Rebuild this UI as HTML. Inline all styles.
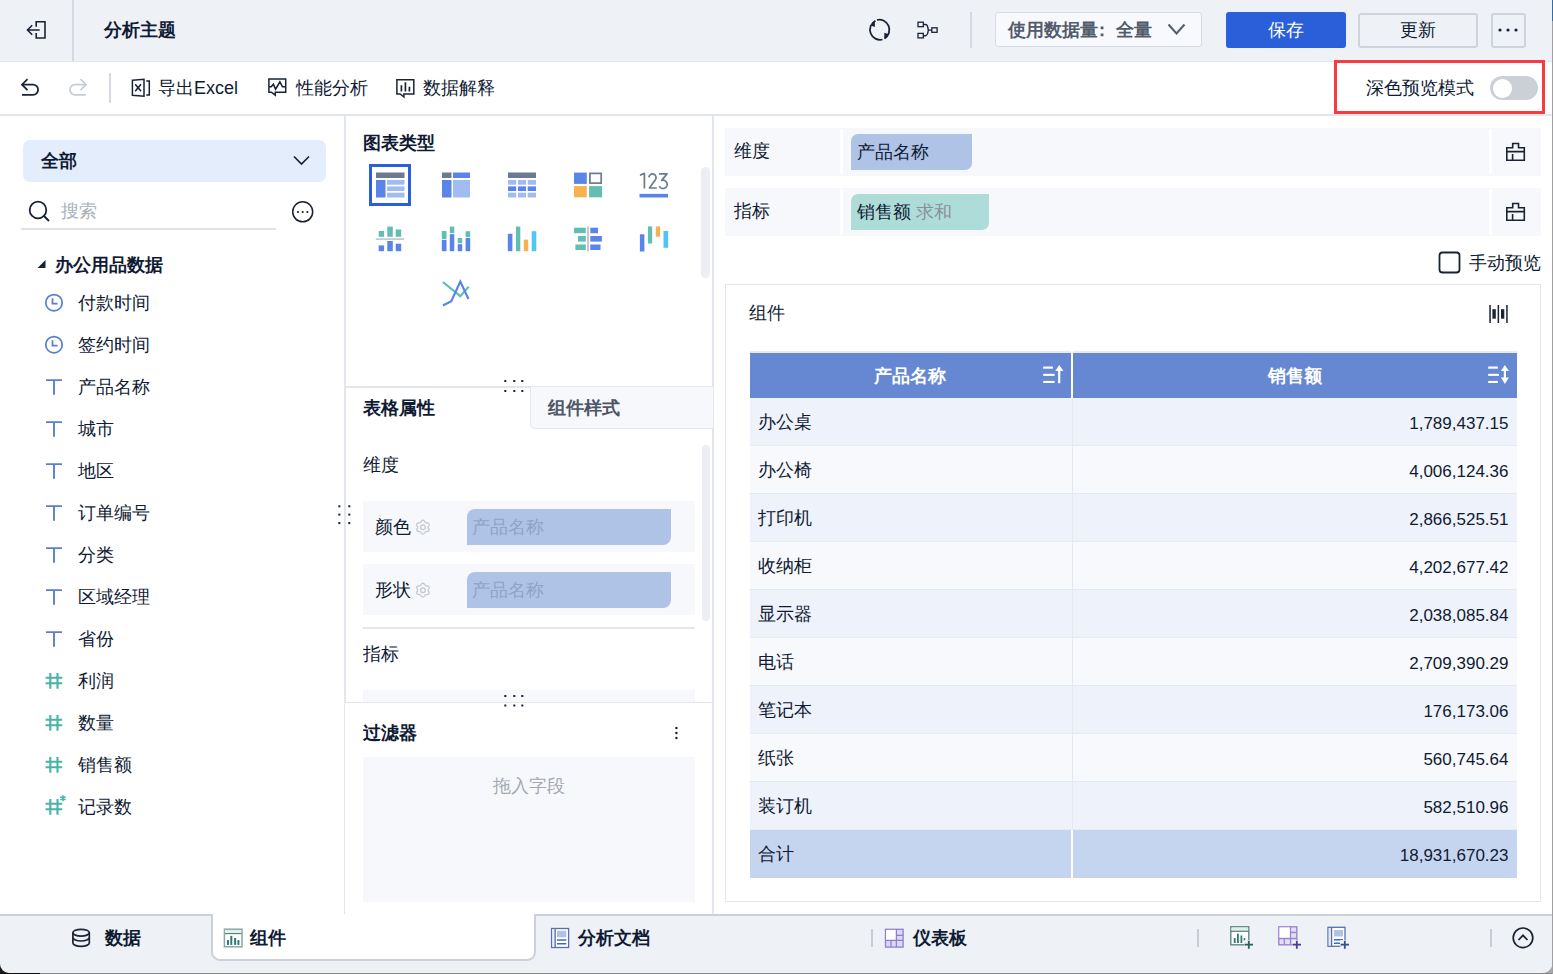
<!DOCTYPE html>
<html><head><meta charset="utf-8">
<style>
*{box-sizing:border-box;margin:0;padding:0}
html,body{width:1553px;height:974px;overflow:hidden;background:#fff}
body{position:relative;font-family:"Liberation Sans",sans-serif;color:#0F1A33;font-size:18px}
.a{position:absolute}
.t{position:absolute;white-space:nowrap;line-height:24px;font-size:18px}
.b{font-weight:bold}
svg{position:absolute;overflow:visible}
</style></head><body>

<!-- ===== HEADER ===== -->
<div class="a" style="left:0;top:0;width:1553px;height:62px;background:#EEF1F6;border-bottom:1px solid #E1E5EC"></div>
<div class="a" style="left:72px;top:0;width:2px;height:61px;background:#D5D9E1"></div>
<!-- exit icon -->
<svg style="left:0;top:0" width="80" height="60">
  <path d="M36.2 26.7 V21.8 H45 V38 H36.2 V33.1" fill="none" stroke="#1A2335" stroke-width="1.6"/>
  <path d="M39.7 30 H27.8 M32.2 25.3 L27.5 30 L32.2 34.7" fill="none" stroke="#1A2335" stroke-width="1.6"/>
</svg>
<div class="t b" style="left:104px;top:18px">分析主题</div>

<!-- refresh icon -->
<svg style="left:0;top:0" width="1553" height="60">
  <path d="M876.9 20 A10.1 10.1 0 0 1 884.6 38.4" fill="none" stroke="#1A2335" stroke-width="1.8"/>
  <path d="M875.5 20.7 A10.1 10.1 0 0 0 882.5 39.5" fill="none" stroke="#1A2335" stroke-width="1.8"/>
  <path d="M874.9 20.6 L874.9 27 L870.6 25.6 Z" fill="#1A2335"/>
  <path d="M884.3 32.8 L884.3 39.2 L888.4 34.2 Z" fill="#1A2335"/>
  <!-- hierarchy -->
  <rect x="918" y="22.2" width="5.3" height="4.5" fill="none" stroke="#1A2335" stroke-width="1.3"/>
  <rect x="918" y="33.4" width="5.3" height="4.5" fill="none" stroke="#1A2335" stroke-width="1.3"/>
  <rect x="931.8" y="27.8" width="5.3" height="4.5" fill="none" stroke="#1A2335" stroke-width="1.3"/>
  <path d="M923.2 24.5 H925.5 Q927.3 24.5 927.8 27.5 L928.3 30 Q927.8 35.5 925.5 35.7 H923.2 M928.3 30.1 H932" fill="none" stroke="#1A2335" stroke-width="1.4"/>
</svg>
<div class="a" style="left:970px;top:12px;width:1.5px;height:36px;background:#D5D9E1"></div>
<!-- data amount dropdown -->
<div class="a" style="left:995px;top:12px;width:207px;height:35px;background:#F8F9FC;border:1.5px solid #D8DCE4;border-radius:3px"></div>
<div class="t b" style="left:1008px;top:18px;color:#535C6B">使用数据量<span style="position:relative;left:-5px">：</span>全量</div>
<svg style="left:0;top:0" width="1553" height="60">
  <path d="M1168.5 24.5 L1176.5 33.5 L1184.5 24.5" fill="none" stroke="#535C6B" stroke-width="2"/>
</svg>
<div class="a" style="left:1226px;top:12px;width:120px;height:36px;background:#2B5FD9;border-radius:3px"></div>
<div class="t" style="left:1268px;top:18px;color:#fff">保存</div>
<div class="a" style="left:1358px;top:12.5px;width:120px;height:35px;background:#EEF1F6;border:2px solid #CFD3DB;border-radius:3px"></div>
<div class="t" style="left:1400px;top:18px;">更新</div>
<div class="a" style="left:1490.5px;top:12.5px;width:35px;height:35px;border:2px solid #CFD3DB;border-radius:3px"></div>
<svg style="left:0;top:0" width="1553" height="60">
  <circle cx="1500" cy="30" r="1.6" fill="#1A2335"/><circle cx="1508" cy="30" r="1.6" fill="#1A2335"/><circle cx="1516" cy="30" r="1.6" fill="#1A2335"/>
</svg>

<!-- ===== TOOLBAR ===== -->
<div class="a" style="left:0;top:114px;width:1553px;height:2px;background:#E3E6ED"></div>
<svg style="left:0;top:0" width="1553" height="120">
  <!-- undo -->
  <path d="M22 94.9 H33 A5.1 5.1 0 0 0 33 84.7 H22" fill="none" stroke="#1A2335" stroke-width="1.8"/>
  <path d="M27.5 79.2 L22 84.7 L27.5 90.2" fill="none" stroke="#1A2335" stroke-width="1.8"/>
  <!-- redo -->
  <path d="M86 94.9 H75 A5.1 5.1 0 0 1 75 84.7 H86" fill="none" stroke="#C8CDD5" stroke-width="1.8"/>
  <path d="M80.5 79.2 L86 84.7 L80.5 90.2" fill="none" stroke="#C8CDD5" stroke-width="1.8"/>
  <!-- excel -->
  <path d="M132.4 80.3 L144 79.3 V96.2 L132.4 95.3 Z" fill="none" stroke="#1A2335" stroke-width="1.5"/>
  <path d="M135.2 84.3 L141 91.3 M141 84.3 L135.2 91.3" fill="none" stroke="#1A2335" stroke-width="1.6"/>
  <path d="M146.3 80.9 H149.3 V95 H146.3" fill="none" stroke="#1A2335" stroke-width="1.5"/>
  <!-- perf -->
  <path d="M268.9 78.9 H285.7 V92.2 H275.3 V95.2 L271.4 92.2 H268.9 Z" fill="none" stroke="#1A2335" stroke-width="1.5" stroke-linejoin="miter"/>
  <path d="M269 86.8 H271.2 L273.4 84.2 L275.6 89.2 L279.9 81.9 L282.5 86.8 H285.7" fill="none" stroke="#1A2335" stroke-width="1.6"/>
  <!-- data explain -->
  <path d="M396.9 79.8 H413.8 V94 H403.9 V97 L400.2 94 H396.9 Z" fill="none" stroke="#1A2335" stroke-width="1.5"/>
  <path d="M401.4 85.2 V91.6 M405.4 82.3 V91.6 M409.4 86.8 V91.6" fill="none" stroke="#1A2335" stroke-width="1.7"/>
</svg>
<div class="a" style="left:109px;top:73px;width:1.5px;height:30px;background:#D5D9E1"></div>
<div class="t" style="left:158px;top:76px">导出Excel</div>
<div class="t" style="left:296px;top:76px">性能分析</div>
<div class="t" style="left:423px;top:76px">数据解释</div>
<!-- dark mode toggle -->
<div class="a" style="left:1334px;top:60px;width:211px;height:54px;border:3px solid #F93A40"></div>
<div class="t" style="left:1366px;top:76px">深色预览模式</div>
<div class="a" style="left:1490px;top:76px;width:48px;height:24px;border-radius:12px;background:#CBCFD6"></div>
<div class="a" style="left:1492.5px;top:78.5px;width:19px;height:19px;border-radius:50%;background:#fff"></div>

<!-- ===== PANELS ===== -->
<div class="a" style="left:344px;top:115px;width:1.5px;height:799px;background:#E3E6ED"></div>
<div class="a" style="left:712px;top:115px;width:2px;height:799px;background:#E3E6ED"></div>

<!-- ===== LEFT PANEL ===== -->
<div class="a" style="left:23px;top:140px;width:303px;height:42px;background:#E4EDFC;border-radius:7px"></div>
<div class="t b" style="left:41px;top:149px">全部</div>
<div class="t" style="left:61px;top:199px;color:#A9AFB9">搜索</div>
<div class="a" style="left:21px;top:228px;width:255px;height:2px;background:#DDE1E8"></div>
<div class="t b" style="left:55px;top:253px">办公用品数据</div>

<div class="t" style="left:78px;top:290.7px">付款时间</div>
<div class="t" style="left:78px;top:332.7px">签约时间</div>
<div class="t" style="left:78px;top:374.7px">产品名称</div>
<div class="t" style="left:78px;top:416.7px">城市</div>
<div class="t" style="left:78px;top:458.7px">地区</div>
<div class="t" style="left:78px;top:500.7px">订单编号</div>
<div class="t" style="left:78px;top:542.7px">分类</div>
<div class="t" style="left:78px;top:584.7px">区域经理</div>
<div class="t" style="left:78px;top:626.7px">省份</div>
<div class="t" style="left:78px;top:668.7px">利润</div>
<div class="t" style="left:78px;top:710.7px">数量</div>
<div class="t" style="left:78px;top:752.7px">销售额</div>
<div class="t" style="left:78px;top:794.7px">记录数</div>
<svg style="left:0;top:0" width="344" height="914">
<path d="M294 156.5 L301.5 164 L309 156.5" fill="none" stroke="#1A2335" stroke-width="1.7"/>
<circle cx="38" cy="210" r="8.3" fill="none" stroke="#1A2335" stroke-width="1.8"/>
<path d="M44 216 L49 221" stroke="#1A2335" stroke-width="1.9"/>
<circle cx="302.7" cy="211.8" r="10" fill="none" stroke="#1A2335" stroke-width="1.5"/>
<circle cx="298" cy="212" r="1.1" fill="#1A2335"/><circle cx="302.7" cy="212" r="1.1" fill="#1A2335"/><circle cx="307.4" cy="212" r="1.1" fill="#1A2335"/>
<path d="M37.5 268 L45.5 268 L45.5 260 Z" fill="#1A2335"/>
<circle cx="54" cy="302.7" r="8.2" fill="none" stroke="#5A7FCF" stroke-width="1.75"/>
<path d="M52.5 298.2 V303.7 H57.5" fill="none" stroke="#5A7FCF" stroke-width="1.75"/>
<circle cx="54" cy="344.7" r="8.2" fill="none" stroke="#5A7FCF" stroke-width="1.75"/>
<path d="M52.5 340.2 V345.7 H57.5" fill="none" stroke="#5A7FCF" stroke-width="1.75"/>
<path d="M46 380.1 H62 M54 380.1 V394.7" fill="none" stroke="#5A7FCF" stroke-width="1.9"/>
<path d="M46 422.1 H62 M54 422.1 V436.7" fill="none" stroke="#5A7FCF" stroke-width="1.9"/>
<path d="M46 464.1 H62 M54 464.1 V478.7" fill="none" stroke="#5A7FCF" stroke-width="1.9"/>
<path d="M46 506.1 H62 M54 506.1 V520.7" fill="none" stroke="#5A7FCF" stroke-width="1.9"/>
<path d="M46 548.1 H62 M54 548.1 V562.7" fill="none" stroke="#5A7FCF" stroke-width="1.9"/>
<path d="M46 590.1 H62 M54 590.1 V604.7" fill="none" stroke="#5A7FCF" stroke-width="1.9"/>
<path d="M46 632.1 H62 M54 632.1 V646.7" fill="none" stroke="#5A7FCF" stroke-width="1.9"/>
<path d="M50.3 673.0 V688.8 M57.5 673.0 V688.8 M45.6 677.7 H62.2 M45.6 683.3 H62.2" fill="none" stroke="#48B3A6" stroke-width="2.1"/>
<path d="M50.3 715.0 V730.8 M57.5 715.0 V730.8 M45.6 719.7 H62.2 M45.6 725.3 H62.2" fill="none" stroke="#48B3A6" stroke-width="2.1"/>
<path d="M50.3 757.0 V772.8 M57.5 757.0 V772.8 M45.6 761.7 H62.2 M45.6 767.3 H62.2" fill="none" stroke="#48B3A6" stroke-width="2.1"/>
<path d="M50.3 799.0 V814.8 M57.5 799.0 V814.8 M45.6 803.7 H62.2 M45.6 809.3 H62.2" fill="none" stroke="#48B3A6" stroke-width="2.1"/>
<path d="M63 795.3 V801.3 M60.4 796.8 L65.6 799.8 M60.4 799.8 L65.6 796.8" stroke="#48B3A6" stroke-width="1.6"/>
</svg>

<!-- ===== MIDDLE PANEL ===== -->
<div class="t b" style="left:363px;top:131px">图表类型</div>
<div class="a" style="left:369px;top:164px;width:42px;height:42px;border:3px solid #2B5FD9"></div>
<svg style="left:0;top:0" width="714" height="914">
 <g id="ic1">
  <rect x="376" y="172.5" width="28.5" height="5.5" fill="#6B7A90"/>
  <rect x="376" y="180" width="9.5" height="17.5" fill="#5B84E8"/>
  <rect x="387" y="180" width="17.5" height="4.7" fill="#A0BCF0"/>
  <rect x="387" y="186.4" width="17.5" height="4.6" fill="#A0BCF0"/>
  <rect x="387" y="192.7" width="17.5" height="4.8" fill="#A0BCF0"/>
 </g>
 <g>
  <rect x="442" y="172.5" width="9.5" height="5.5" fill="#6B7A90"/>
  <rect x="453" y="172.5" width="17" height="5.5" fill="#5B84E8"/>
  <rect x="442" y="180" width="9.5" height="17.5" fill="#5B84E8"/>
  <rect x="453" y="180" width="17" height="17.5" fill="#A0BCF0"/>
 </g>
 <g>
  <rect x="508" y="172.5" width="28" height="5.5" fill="#6B7A90"/>
  <rect x="508" y="180" width="8.2" height="4.7" fill="#A0BCF0"/><rect x="518" y="180" width="8" height="4.7" fill="#A0BCF0"/><rect x="527.7" y="180" width="8.3" height="4.7" fill="#A0BCF0"/>
  <rect x="508" y="186.4" width="8.2" height="4.6" fill="#5B84E8"/><rect x="518" y="186.4" width="8" height="4.6" fill="#5B84E8"/><rect x="527.7" y="186.4" width="8.3" height="4.6" fill="#5B84E8"/>
  <rect x="508" y="192.7" width="8.2" height="4.8" fill="#A0BCF0"/><rect x="518" y="192.7" width="8" height="4.8" fill="#A0BCF0"/><rect x="527.7" y="192.7" width="8.3" height="4.8" fill="#A0BCF0"/>
 </g>
 <g>
  <rect x="574" y="172.6" width="12.8" height="11.3" fill="#5B84E8"/>
  <rect x="589.9" y="173.4" width="11.3" height="9.7" fill="none" stroke="#6B7A90" stroke-width="1.7"/>
  <rect x="574" y="186.1" width="12.8" height="11.2" fill="#F9B04F"/>
  <rect x="589.1" y="186.1" width="12.9" height="11.2" fill="#62BEB3"/>
 </g>
 <g>
  <path d="M639.9 175.3 L644.4 173.4 V188.6 M648.9 177.4 A3.6 3.6 0 1 1 655.6 179.4 L649.4 188 H656.8 M659.1 173.9 H667 L661.7 180.4 A4.15 4.15 0 1 1 659.2 186" fill="none" stroke="#6B7A90" stroke-width="1.7" stroke-linejoin="round"/>
  <rect x="639.5" y="193.9" width="28.5" height="3.6" fill="#5B84E8"/>
 </g>
 <!-- row 2 -->
 <g>
  <rect x="378.7" y="231" width="5.4" height="5.8" fill="#62BEB3"/>
  <rect x="387.3" y="226.6" width="5.5" height="10.2" fill="#62BEB3"/>
  <rect x="395.7" y="229.5" width="5.5" height="7.3" fill="#62BEB3"/>
  <rect x="375.8" y="238.2" width="28.4" height="1.8" fill="#C5CAD3"/>
  <rect x="378.7" y="245.4" width="5.4" height="5.8" fill="#5B84E8"/>
  <rect x="387.3" y="241" width="5.5" height="10.2" fill="#5B84E8"/>
  <rect x="395.7" y="243.7" width="5.5" height="7.5" fill="#5B84E8"/>
 </g>
 <g>
  <rect x="441.8" y="231" width="4.7" height="8.1" fill="#62BEB3"/><rect x="441.8" y="239.9" width="4.7" height="11.3" fill="#5B84E8"/>
  <rect x="449.8" y="226.6" width="4.5" height="6.4" fill="#62BEB3"/><rect x="449.8" y="234.1" width="4.5" height="17.1" fill="#5B84E8"/>
  <rect x="457.7" y="238" width="4.5" height="5.2" fill="#62BEB3"/><rect x="457.7" y="244.2" width="4.5" height="7" fill="#5B84E8"/>
  <rect x="465.6" y="231.2" width="4.6" height="5.8" fill="#62BEB3"/><rect x="465.6" y="238" width="4.6" height="13.2" fill="#5B84E8"/>
 </g>
 <g>
  <rect x="507.8" y="233.8" width="4.6" height="17.4" fill="#5B84E8"/>
  <rect x="515.9" y="226.6" width="4.4" height="24.6" fill="#62BEB3"/>
  <rect x="523.8" y="239.6" width="4.4" height="11.6" fill="#F9B04F"/>
  <rect x="531.7" y="231.2" width="4.6" height="20" fill="#52C5F5"/>
 </g>
 <g>
  <rect x="587.2" y="226.4" width="1.6" height="25.1" fill="#B8BDC7"/>
  <rect x="574" y="227.7" width="11.8" height="5.5" fill="#62BEB3"/>
  <rect x="578" y="236" width="7.8" height="5.6" fill="#62BEB3"/>
  <rect x="575.4" y="244.5" width="10.4" height="5.5" fill="#62BEB3"/>
  <rect x="590.3" y="227.7" width="7.7" height="5.5" fill="#5B84E8"/>
  <rect x="590.3" y="236" width="11.6" height="5.6" fill="#5B84E8"/>
  <rect x="590.3" y="244.5" width="10.2" height="5.5" fill="#5B84E8"/>
 </g>
 <g>
  <rect x="639.9" y="234.3" width="4.5" height="17.2" fill="#5B84E8"/>
  <rect x="647.9" y="226.4" width="4.3" height="17.1" fill="#62BEB3"/>
  <rect x="655.8" y="226.4" width="4.3" height="10.3" fill="#F9B04F"/>
  <rect x="663.5" y="231" width="4.7" height="16.8" fill="#52C5F5"/>
 </g>
 <!-- row 3 line chart -->
 <polyline points="442.9,282 460.3,296.2 468.7,286.6" fill="none" stroke="#62BEB3" stroke-width="2.2"/>
 <polyline points="442.9,305.4 451.3,301.3 460.3,281.5 468.5,299" fill="none" stroke="#5B84E8" stroke-width="2.2"/>
 <!-- scrollbar top -->
 <rect x="701" y="167" width="9" height="111" rx="4.5" fill="#ECEEF3"/>
 <!-- grip dots -->
 <g fill="#1A2335">
  <rect x="504.3" y="380" width="2" height="2"/><rect x="513.3" y="380" width="2" height="2"/><rect x="521.3" y="380" width="2" height="2"/>
  <rect x="504.3" y="390" width="2" height="2"/><rect x="513.3" y="390" width="2" height="2"/><rect x="521.3" y="390" width="2" height="2"/>
  <rect x="504.3" y="695" width="2" height="2"/><rect x="513.3" y="695" width="2" height="2"/><rect x="521.3" y="695" width="2" height="2"/>
  <rect x="504.3" y="704.5" width="2" height="2"/><rect x="513.3" y="704.5" width="2" height="2"/><rect x="521.3" y="704.5" width="2" height="2"/>
  <rect x="338.3" y="505.3" width="2" height="2"/><rect x="348.3" y="505.3" width="2" height="2"/>
  <rect x="338.3" y="513.6" width="2" height="2"/><rect x="348.3" y="513.6" width="2" height="2"/>
  <rect x="338.3" y="522.1" width="2" height="2"/><rect x="348.3" y="522.1" width="2" height="2"/>
 </g>
</svg>
<!-- divider between chart type & props -->
<div class="a" style="left:345px;top:386px;width:367px;height:1.5px;background:#E3E6ED"></div>
<!-- tabs -->
<div class="t b" style="left:363px;top:396px">表格属性</div>
<div class="a" style="left:529.5px;top:386.5px;width:183px;height:42px;background:#F7F8FB;border-left:1.5px solid #E3E6ED;border-bottom:1.5px solid #E3E6ED;border-bottom-left-radius:5px"></div>
<div class="t b" style="left:548px;top:396px;color:#4D5666">组件样式</div>
<!-- lower scrollbar -->
<div class="a" style="left:701.5px;top:444.5px;width:8.5px;height:176px;border-radius:4.5px;background:#ECEEF3"></div>
<div class="t" style="left:363px;top:453px">维度</div>
<div class="a" style="left:363px;top:501px;width:332px;height:50.5px;background:#F7F8FB"></div>
<div class="a" style="left:363px;top:564px;width:332px;height:51px;background:#F7F8FB"></div>
<div class="t" style="left:374.5px;top:515px">颜色</div>
<div class="t" style="left:374.5px;top:578px">形状</div>
<div class="a" style="left:467px;top:509px;width:204px;height:36px;background:#AEC3E6;border-radius:8px 0 8px 0"></div>
<div class="a" style="left:467px;top:572px;width:204px;height:35.5px;background:#AEC3E6;border-radius:8px 0 8px 0"></div>
<div class="t" style="left:472px;top:515px;color:#8FA3C6">产品名称</div>
<div class="t" style="left:472px;top:578px;color:#8FA3C6">产品名称</div>
<svg style="left:0;top:0" width="714" height="914">
 <g fill="none" stroke="#C3C8D0" stroke-width="1.25">
  <path d="M428.10 527.20 L428.24 527.76 L428.59 528.41 L428.97 529.17 L429.14 529.98 L428.96 530.70 L428.42 531.21 L427.64 531.47 L426.80 531.53 L426.06 531.55 L425.50 531.70 L425.08 532.11 L424.70 532.74 L424.23 533.44 L423.61 533.99 L422.90 534.20 L422.19 533.99 L421.57 533.44 L421.10 532.74 L420.72 532.11 L420.30 531.70 L419.74 531.55 L419.00 531.53 L418.16 531.47 L417.38 531.21 L416.84 530.70 L416.66 529.98 L416.83 529.17 L417.21 528.41 L417.56 527.76 L417.70 527.20 L417.56 526.64 L417.21 525.99 L416.83 525.23 L416.66 524.42 L416.84 523.70 L417.38 523.19 L418.16 522.93 L419.00 522.87 L419.74 522.85 L420.30 522.70 L420.72 522.29 L421.10 521.66 L421.57 520.96 L422.19 520.41 L422.90 520.20 L423.61 520.41 L424.23 520.96 L424.70 521.66 L425.08 522.29 L425.50 522.70 L426.06 522.85 L426.80 522.87 L427.64 522.93 L428.42 523.19 L428.96 523.70 L429.14 524.42 L428.97 525.23 L428.59 525.99 L428.24 526.64 L428.10 527.20Z"/>
  <circle cx="422.9" cy="527.2" r="2.3"/>
  <path d="M428.10 590.20 L428.24 590.76 L428.59 591.41 L428.97 592.17 L429.14 592.98 L428.96 593.70 L428.42 594.21 L427.64 594.47 L426.80 594.53 L426.06 594.55 L425.50 594.70 L425.08 595.11 L424.70 595.74 L424.23 596.44 L423.61 596.99 L422.90 597.20 L422.19 596.99 L421.57 596.44 L421.10 595.74 L420.72 595.11 L420.30 594.70 L419.74 594.55 L419.00 594.53 L418.16 594.47 L417.38 594.21 L416.84 593.70 L416.66 592.98 L416.83 592.17 L417.21 591.41 L417.56 590.76 L417.70 590.20 L417.56 589.64 L417.21 588.99 L416.83 588.23 L416.66 587.42 L416.84 586.70 L417.38 586.19 L418.16 585.93 L419.00 585.87 L419.74 585.85 L420.30 585.70 L420.72 585.29 L421.10 584.66 L421.57 583.96 L422.19 583.41 L422.90 583.20 L423.61 583.41 L424.23 583.96 L424.70 584.66 L425.08 585.29 L425.50 585.70 L426.06 585.85 L426.80 585.87 L427.64 585.93 L428.42 586.19 L428.96 586.70 L429.14 587.42 L428.97 588.23 L428.59 588.99 L428.24 589.64 L428.10 590.20Z"/>
  <circle cx="422.9" cy="590.2" r="2.3"/>
 </g>
</svg>
<div class="a" style="left:363px;top:626.5px;width:332px;height:2px;background:#E3E6ED"></div>
<div class="t" style="left:363px;top:642px">指标</div>
<div class="a" style="left:363px;top:689.5px;width:332px;height:12px;background:#F7F8FB"></div>
<div class="a" style="left:345px;top:701.5px;width:367px;height:1.5px;background:#E3E6ED"></div>
<div class="a" style="left:345px;top:703px;width:367px;height:211px;background:#fff"></div>
<svg style="left:0;top:0" width="714" height="914">
 <g fill="#1A2335">
  <rect x="504.3" y="695" width="2" height="2"/><rect x="513.3" y="695" width="2" height="2"/><rect x="521.3" y="695" width="2" height="2"/>
  <rect x="504.3" y="704.5" width="2" height="2"/><rect x="513.3" y="704.5" width="2" height="2"/><rect x="521.3" y="704.5" width="2" height="2"/>
  <circle cx="676.4" cy="728" r="1.2"/><circle cx="676.4" cy="733" r="1.2"/><circle cx="676.4" cy="738" r="1.2"/>
 </g>
</svg>
<div class="t b" style="left:363px;top:721px">过滤器</div>
<div class="a" style="left:363px;top:757px;width:332px;height:145px;background:#F7F8FB"></div>
<div class="t" style="left:492.5px;top:774px;color:#A3A8B1">拖入字段</div>

<!-- ===== RIGHT PANEL ===== -->
<div class="a" style="left:725px;top:128px;width:816px;height:47.7px;background:#F7F8FB"></div>
<div class="a" style="left:725px;top:187.8px;width:816px;height:48px;background:#F7F8FB"></div>
<div class="a" style="left:840px;top:129px;width:3px;height:45px;background:#fff"></div>
<div class="a" style="left:840px;top:189px;width:3px;height:45.5px;background:#fff"></div>
<div class="a" style="left:1489px;top:129px;width:3px;height:45px;background:#fff"></div>
<div class="a" style="left:1489px;top:189px;width:3px;height:45.5px;background:#fff"></div>
<div class="t" style="left:734px;top:139px">维度</div>
<div class="t" style="left:734px;top:199px">指标</div>
<div class="a" style="left:851px;top:134px;width:121px;height:36px;background:#AEC3E6;border-radius:7px 0 7px 0"></div>
<div class="t" style="left:856.5px;top:139.5px">产品名称</div>
<div class="a" style="left:851px;top:194px;width:138px;height:35.6px;background:#AEDDD9;border-radius:7px 0 7px 0"></div>
<div class="t" style="left:856.5px;top:199.5px">销售额 <span style="color:#8A8F99">求和</span></div>
<svg style="left:0;top:0" width="1553" height="914">
 <g fill="none" stroke="#1A2335" stroke-width="1.6">
  <path id="lk" d="M1506.8 147.8 H1512.7 V143.5 H1518.5 V147.8 H1524.3 V160.2 H1506.8 Z M1506.8 151.6 H1524.3 M1512.6 154 V160.2"/>
  <use href="#lk" transform="translate(0,60)"/>
 </g>
 <rect x="1439.5" y="252.5" width="20" height="20" rx="3" fill="none" stroke="#1A2335" stroke-width="1.8"/>

</svg>
<div class="t" style="left:1469px;top:250.5px">手动预览</div>
<!-- component box -->
<div class="a" style="left:725px;top:284px;width:816px;height:618px;border:1.2px solid #E3E6EE;background:#fff"></div>
<div class="t" style="left:749px;top:301px">组件</div>
<svg style="left:0;top:0" width="1553" height="914"> <g fill="#1A2335">
  <rect x="1489.3" y="305" width="1.5" height="18"/>
  <rect x="1492.4" y="309.2" width="3.4" height="9.5"/>
  <rect x="1497.6" y="305" width="1.5" height="18"/>
  <rect x="1501" y="309.2" width="3.3" height="9.5"/>
  <rect x="1506.2" y="305" width="1.5" height="18"/>
 </g></svg>
<!-- table -->
<div class="a" style="left:749.5px;top:351.2px;width:767.5px;height:1.8px;background:#E6EAF2"></div>
<div class="a" style="left:749.5px;top:353px;width:767.5px;height:44.8px;background:#6688D2"></div>
<div class="a" style="left:1071px;top:351.2px;width:2px;height:46.6px;background:#fff"></div>
<div class="t" style="left:874px;top:364px;color:#fff;font-weight:900">产品名称</div>
<div class="t" style="left:1267.5px;top:364px;color:#fff;font-weight:900">销售额</div>
<svg style="left:0;top:0" width="1553" height="914">
 <g fill="#fff">
  <rect x="1043.2" y="366.5" width="9.7" height="2.2"/><rect x="1043.2" y="373.8" width="11.4" height="2.1"/><rect x="1043.2" y="380.9" width="11.4" height="2.1"/>
  <rect x="1058.1" y="370" width="2.2" height="13.2"/><path d="M1055.3 371 L1059.2 365.1 L1063.5 371 Z"/>
  <rect x="1488.2" y="366.5" width="9.7" height="2.2"/><rect x="1488.2" y="373.8" width="10.8" height="2.1"/><rect x="1488.2" y="380.9" width="9.7" height="2.1"/>
  <rect x="1503.8" y="370" width="2.2" height="8"/><path d="M1500.9 371 L1504.9 365 L1508.9 371 Z M1500.9 377.5 L1504.9 384 L1508.9 377.5 Z"/>
 </g>
</svg>

<div class="a" style="left:749.5px;top:397.8px;width:767.5px;height:48px;background:#EEF2FA;border-bottom:1.6px solid #E4E9F2"></div>
<div class="t" style="left:757.5px;top:410.3px">办公桌</div>
<div class="t" style="right:44.5px;top:411.8px;font-size:17px">1,789,437.15</div>
<div class="a" style="left:749.5px;top:445.8px;width:767.5px;height:48px;background:#F7F9FD;border-bottom:1.6px solid #E4E9F2"></div>
<div class="t" style="left:757.5px;top:458.3px">办公椅</div>
<div class="t" style="right:44.5px;top:459.8px;font-size:17px">4,006,124.36</div>
<div class="a" style="left:749.5px;top:493.8px;width:767.5px;height:48px;background:#EEF2FA;border-bottom:1.6px solid #E4E9F2"></div>
<div class="t" style="left:757.5px;top:506.3px">打印机</div>
<div class="t" style="right:44.5px;top:507.8px;font-size:17px">2,866,525.51</div>
<div class="a" style="left:749.5px;top:541.8px;width:767.5px;height:48px;background:#F7F9FD;border-bottom:1.6px solid #E4E9F2"></div>
<div class="t" style="left:757.5px;top:554.3px">收纳柜</div>
<div class="t" style="right:44.5px;top:555.8px;font-size:17px">4,202,677.42</div>
<div class="a" style="left:749.5px;top:589.8px;width:767.5px;height:48px;background:#EEF2FA;border-bottom:1.6px solid #E4E9F2"></div>
<div class="t" style="left:757.5px;top:602.3px">显示器</div>
<div class="t" style="right:44.5px;top:603.8px;font-size:17px">2,038,085.84</div>
<div class="a" style="left:749.5px;top:637.8px;width:767.5px;height:48px;background:#F7F9FD;border-bottom:1.6px solid #E4E9F2"></div>
<div class="t" style="left:757.5px;top:650.3px">电话</div>
<div class="t" style="right:44.5px;top:651.8px;font-size:17px">2,709,390.29</div>
<div class="a" style="left:749.5px;top:685.8px;width:767.5px;height:48px;background:#EEF2FA;border-bottom:1.6px solid #E4E9F2"></div>
<div class="t" style="left:757.5px;top:698.3px">笔记本</div>
<div class="t" style="right:44.5px;top:699.8px;font-size:17px">176,173.06</div>
<div class="a" style="left:749.5px;top:733.8px;width:767.5px;height:48px;background:#F7F9FD;border-bottom:1.6px solid #E4E9F2"></div>
<div class="t" style="left:757.5px;top:746.3px">纸张</div>
<div class="t" style="right:44.5px;top:747.8px;font-size:17px">560,745.64</div>
<div class="a" style="left:749.5px;top:781.8px;width:767.5px;height:48px;background:#EEF2FA;border-bottom:1.6px solid #E4E9F2"></div>
<div class="t" style="left:757.5px;top:794.3px">装订机</div>
<div class="t" style="right:44.5px;top:795.8px;font-size:17px">582,510.96</div>
<div class="a" style="left:749.5px;top:829.8px;width:767.5px;height:48px;background:#C6D5EF"></div>
<div class="t" style="left:757.5px;top:842.3px">合计</div>
<div class="t" style="right:44.5px;top:843.8px;font-size:17px">18,931,670.23</div>
<div class="a" style="left:1071.5px;top:397.8px;width:1.2px;height:480px;background:#E3E8F2"></div>
<div class="a" style="left:1070.5px;top:829.8px;width:2.5px;height:48px;background:#fff"></div>

<!-- ===== BOTTOM BAR ===== -->
<div class="a" style="left:0;top:914px;width:1553px;height:60px;background:#EEF1F6;border-top:2px solid #CBD0D9"></div>
<div class="a" style="left:211px;top:914px;width:325px;height:47px;background:#fff;border:2px solid #CBD0D9;border-top:none;border-radius:0 0 9px 9px"></div>
<div class="t b" style="left:105px;top:926px">数据</div>
<div class="t b" style="left:250px;top:926px">组件</div>
<div class="t b" style="left:578px;top:926px">分析文档</div>
<div class="t b" style="left:912.5px;top:926px">仪表板</div>
<div class="a" style="left:870.5px;top:929px;width:2px;height:18px;background:#C8CDD5"></div>
<div class="a" style="left:1197px;top:929px;width:2px;height:18px;background:#C8CDD5"></div>
<div class="a" style="left:1490px;top:929px;width:2px;height:18px;background:#C8CDD5"></div>
<svg style="left:0;top:0" width="1553" height="974">
 <!-- db icon -->
 <g fill="none" stroke="#1A2335" stroke-width="1.7">
  <ellipse cx="81.1" cy="932.7" rx="8.2" ry="3.4"/>
  <path d="M72.9 932.7 V943 A8.2 3.4 0 0 0 89.3 943 V932.7 M72.9 937.6 A8.2 3.4 0 0 0 89.3 937.6"/>
 </g>
 <!-- component icon (teal) -->
 <g>
  <rect x="224.4" y="929.2" width="17.6" height="17.6" fill="#fff" stroke="#8AA8A4" stroke-width="1.5"/>
  <rect x="225.2" y="930" width="16" height="3.2" fill="#DFF2EF"/>
  <path d="M225 933.6 H241.5" stroke="#4E7F78" stroke-width="1.1"/>
  <rect x="227" y="940.1" width="2" height="4.8" fill="#2F7A70"/>
  <rect x="230.3" y="935.9" width="2" height="9" fill="#2F7A70"/>
  <rect x="234.1" y="938" width="2" height="6.9" fill="#2F7A70"/>
  <rect x="237.4" y="940.1" width="2" height="4.8" fill="#2F7A70"/>
 </g>
 <!-- doc icon -->
 <g>
  <rect x="551.6" y="928.5" width="17" height="19" fill="#fff" stroke="#5A6FA8" stroke-width="1.3"/>
  <rect x="552.3" y="929.2" width="2.7" height="17.6" fill="#E2E8F6"/>
  <path d="M555.2 928.5 V947.5" stroke="#5A6FA8" stroke-width="1.3"/>
  <rect x="557" y="930.8" width="9.3" height="6.5" fill="#AFC3EA"/>
  <path d="M557 940.1 H566.3 M557 943.8 H566.3" stroke="#4468C2" stroke-width="1.5"/>
 </g>
 <!-- dashboard icon -->
 <g>
  <rect x="885.5" y="929.3" width="17.6" height="17.8" fill="#DDD8F8" stroke="#8E7ECB" stroke-width="1.3"/>
  <rect x="886.1" y="929.9" width="10.2" height="10.3" fill="#fff"/>
  <path d="M896.4 929.3 V947.1 M885.5 940.4 H903.1 M896.4 935.4 H903.1 M891 940.4 V947.1" stroke="#8E7ECB" stroke-width="1.3"/>
 </g>
 <!-- add chart -->
 <g>
  <rect x="1230.8" y="926.8" width="18" height="18" fill="#fff" stroke="#557F79" stroke-width="1.3"/>
  <rect x="1231.5" y="927.5" width="16.6" height="3.4" fill="#D9F0EC"/>
  <path d="M1230.8 931.3 H1248.8" stroke="#557F79" stroke-width="1.2"/>
  <rect x="1233.8" y="938" width="1.8" height="5" fill="#2F7A70"/><rect x="1237" y="933.7" width="1.8" height="9.3" fill="#2F7A70"/><rect x="1240.5" y="935.5" width="1.8" height="7.5" fill="#2F7A70"/><rect x="1243.7" y="938" width="1.5" height="3" fill="#2F7A70"/>
  <rect x="1244.2" y="940" width="9.5" height="9.5" fill="#EEF1F6"/>
  <path d="M1248.8 940.7 V948.8 M1244.6 944.6 H1253" stroke="#2A5F58" stroke-width="1.8"/>
 </g>
 <!-- add dashboard -->
 <g>
  <rect x="1278.8" y="926.8" width="18" height="18" fill="#E3DDF7" stroke="#9A86D0" stroke-width="1.4"/>
  <rect x="1279.5" y="927.5" width="10.8" height="10.8" fill="#fff"/>
  <path d="M1290.5 926.8 V944.8 M1278.8 938.5 H1296.8 M1290.5 932.5 H1296.8 M1284.3 938.5 V944.8" stroke="#9A86D0" stroke-width="1.3"/>
  <rect x="1292.2" y="940" width="9.5" height="9.5" fill="#EEF1F6"/>
  <path d="M1296.8 940.7 V948.8 M1292.6 944.6 H1301" stroke="#4B3AA0" stroke-width="1.8"/>
 </g>
 <!-- add doc -->
 <g>
  <rect x="1328" y="927.3" width="17" height="19" fill="#fff" stroke="#5570B0" stroke-width="1.3"/>
  <rect x="1328.7" y="928" width="2.7" height="17.6" fill="#E2E8F6"/>
  <path d="M1331.6 927.3 V946.3" stroke="#5570B0" stroke-width="1.3"/>
  <rect x="1334" y="930" width="9" height="6.5" fill="#AFC3EA"/>
  <path d="M1334 939.8 H1343 M1334 943.3 H1340" stroke="#4468C2" stroke-width="1.5"/>
  <rect x="1340.2" y="940" width="9.5" height="9.5" fill="#EEF1F6"/>
  <path d="M1344.8 940.7 V948.8 M1340.6 944.6 H1349" stroke="#2F4E9C" stroke-width="1.8"/>
 </g>
 <!-- up circle -->
 <circle cx="1523" cy="937.8" r="9.8" fill="none" stroke="#1A2335" stroke-width="1.7"/>
 <path d="M1518.5 940 L1523 935.3 L1527.5 940" fill="none" stroke="#1A2335" stroke-width="1.7"/>
</svg>
<!-- window edges -->
<div class="a" style="left:0;top:973px;width:1553px;height:1px;background:#8A8A8A"></div>
<svg style="left:0;top:0" width="1553" height="974">
 <path d="M0 964 A9 9 0 0 0 9 973 H0 Z" fill="#1b1b1b"/>
 <rect x="0" y="973" width="40" height="1" fill="#111"/>
 <path d="M1553 962 A11 11 0 0 1 1542 973 H1553 Z" fill="#A8A8A8"/>
</svg>
<div class="a" style="left:1552px;top:0;width:1px;height:974px;background:#A0A0A0"></div><div class="a" style="left:1552px;top:0;width:1px;height:21px;background:#2D6DA8"></div>


</body></html>
